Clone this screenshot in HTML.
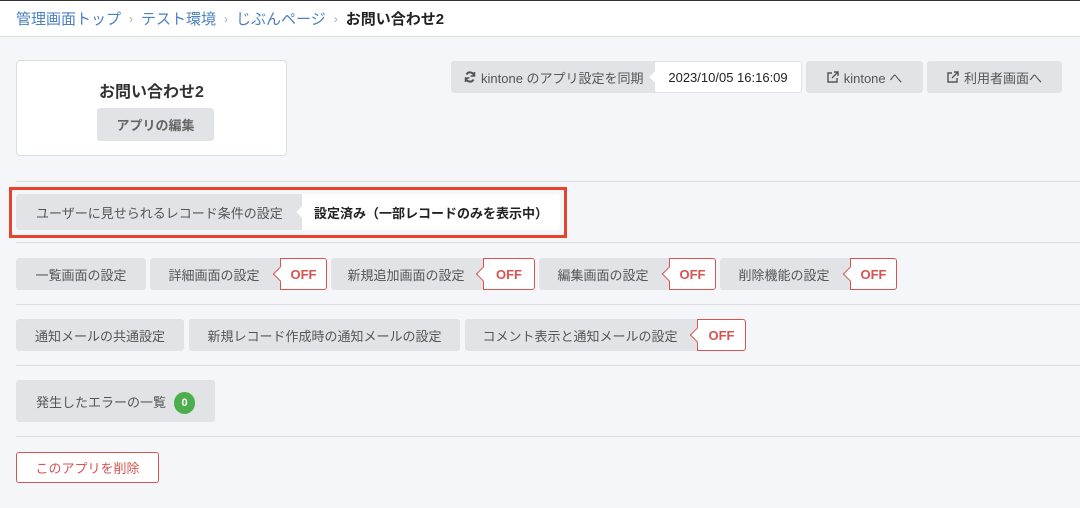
<!DOCTYPE html>
<html><head><meta charset="utf-8"><style>
*{box-sizing:border-box;margin:0;padding:0}
body{width:1080px;height:508px;background:#f5f6fa;font-family:"Liberation Sans","Noto Sans CJK JP",sans-serif;position:relative;overflow:hidden;color:#555}
.a{position:absolute;display:flex;align-items:center;justify-content:center;white-space:nowrap}
.g{background:#e2e3e6;border-radius:3px;font-size:13px;color:#555}
.w{background:#fff;border-radius:3px}
.off{background:#fff;border:1px solid #d9534f;color:#d9534f;font-weight:bold;font-size:13px;border-radius:0 3px 3px 0}
.off:before,.dt:before{content:"";position:absolute;left:-6px;top:50%;width:10px;height:10px;background:#fff;transform:translateY(-50%) rotate(45deg);border-left:1px solid #d9534f;border-bottom:1px solid #d9534f}
.dt:before{border:none;left:-4px;width:8px;height:8px}
.hr{position:absolute;left:16px;right:0;height:1px;background:#dcdde0}
svg{margin-right:5px}
</style></head><body>
<div style="position:absolute;left:0;top:0;width:1080px;height:1px;background:#333"></div>
<div class="a" style="left:0;top:1px;width:1080px;height:36px;background:#fff;border-bottom:1px solid #dcdde0;justify-content:flex-start;padding-left:16px;font-size:15px">
<span style="color:#4a7fc1">管理画面トップ</span><span style="color:#aaa;margin:0 8px;font-size:12px">›</span><span style="color:#4a7fc1">テスト環境</span><span style="color:#aaa;margin:0 8px;font-size:12px">›</span><span style="color:#4a7fc1">じぶんページ</span><span style="color:#aaa;margin:0 8px;font-size:12px">›</span><b style="color:#222">お問い合わせ2</b></div>

<div style="position:absolute;left:16px;top:60px;width:271px;height:96px;background:#fff;border:1px solid #dcdde0;border-radius:4px"></div>
<div class="a" style="left:16px;top:78px;width:271px;height:24px;font-size:16px;font-weight:bold;color:#333">お問い合わせ2</div>
<div class="a g" style="left:97px;top:108px;width:117px;height:33px;font-weight:bold;color:#666">アプリの編集</div>

<div class="a g" style="left:451px;top:61px;width:210px;height:32px;justify-content:flex-start;padding-left:13px"><svg width="12" height="12" viewBox="0 0 12 12" fill="none" stroke="#555" stroke-width="2"><path d="M10 5A4 4 0 0 0 2.5 3.5M2 7a4 4 0 0 0 7.5 1.5"/><path d="M10.5 1v4h-4M1.5 11V7h4" stroke-width="1.5"/></svg>kintone のアプリ設定を同期</div>
<div class="a w dt" style="left:654px;top:61px;width:148px;height:32px;font-size:13px;color:#222;border:1px solid #e2e3e6">2023/10/05 16:16:09</div>
<div class="a g" style="left:806px;top:61px;width:117px;height:32px"><svg width="12" height="12" viewBox="0 0 12 12" fill="none" stroke="#555" stroke-width="1.4"><path d="M5 2H1v9h9V7M7 1h4v4M11 1L5 7"/></svg>kintone へ</div>
<div class="a g" style="left:927px;top:61px;width:135px;height:32px"><svg width="12" height="12" viewBox="0 0 12 12" fill="none" stroke="#555" stroke-width="1.4"><path d="M5 2H1v9h9V7M7 1h4v4M11 1L5 7"/></svg>利用者画面へ</div>

<div class="hr" style="top:181px"></div>
<div style="position:absolute;left:9px;top:187px;width:558px;height:51px;border:3px solid #e8412c"></div>
<div class="a g" style="left:16px;top:194px;width:292px;height:36px;justify-content:flex-start;padding-left:20px;border-radius:3px 0 0 3px">ユーザーに見せられるレコード条件の設定</div>
<div class="a w dt" style="left:302px;top:194px;width:258px;height:36px;font-size:13px;color:#222;font-weight:bold;justify-content:flex-start;padding-left:12px;border-radius:0 3px 3px 0">設定済み（一部レコードのみを表示中）</div>
<div class="hr" style="top:242px"></div>

<div class="a g" style="left:16px;top:258px;width:130px;height:32px">一覧画面の設定</div>
<div class="a g" style="left:150px;top:258px;width:136px;height:32px;padding-right:8px">詳細画面の設定</div>
<div class="a off" style="left:280px;top:258px;width:47px;height:32px">OFF</div>
<div class="a g" style="left:331px;top:258px;width:158px;height:32px;padding-right:8px">新規追加画面の設定</div>
<div class="a off" style="left:483px;top:258px;width:52px;height:32px">OFF</div>
<div class="a g" style="left:539px;top:258px;width:136px;height:32px;padding-right:8px">編集画面の設定</div>
<div class="a off" style="left:669px;top:258px;width:47px;height:32px">OFF</div>
<div class="a g" style="left:720px;top:258px;width:136px;height:32px;padding-right:8px">削除機能の設定</div>
<div class="a off" style="left:850px;top:258px;width:47px;height:32px">OFF</div>
<div class="hr" style="top:304px"></div>

<div class="a g" style="left:16px;top:319px;width:168px;height:32px">通知メールの共通設定</div>
<div class="a g" style="left:189px;top:319px;width:271px;height:32px">新規レコード作成時の通知メールの設定</div>
<div class="a g" style="left:465px;top:319px;width:238px;height:32px;padding-right:8px">コメント表示と通知メールの設定</div>
<div class="a off" style="left:697px;top:319px;width:49px;height:32px">OFF</div>
<div class="hr" style="top:365px"></div>

<div class="a g" style="left:16px;top:380px;width:199px;height:42px;justify-content:flex-start;padding-left:20px">発生したエラーの一覧</div>
<div class="a" style="left:174px;top:392px;width:21px;height:22px;border-radius:11px;background:#4cae4c;color:#fff;font-size:11px;font-weight:bold">0</div>
<div class="hr" style="top:436px"></div>

<div class="a" style="left:16px;top:452px;width:143px;height:31px;background:#fff;border:1px solid #d9534f;border-radius:3px;color:#d9534f;font-size:13px">このアプリを削除</div>
</body></html>
